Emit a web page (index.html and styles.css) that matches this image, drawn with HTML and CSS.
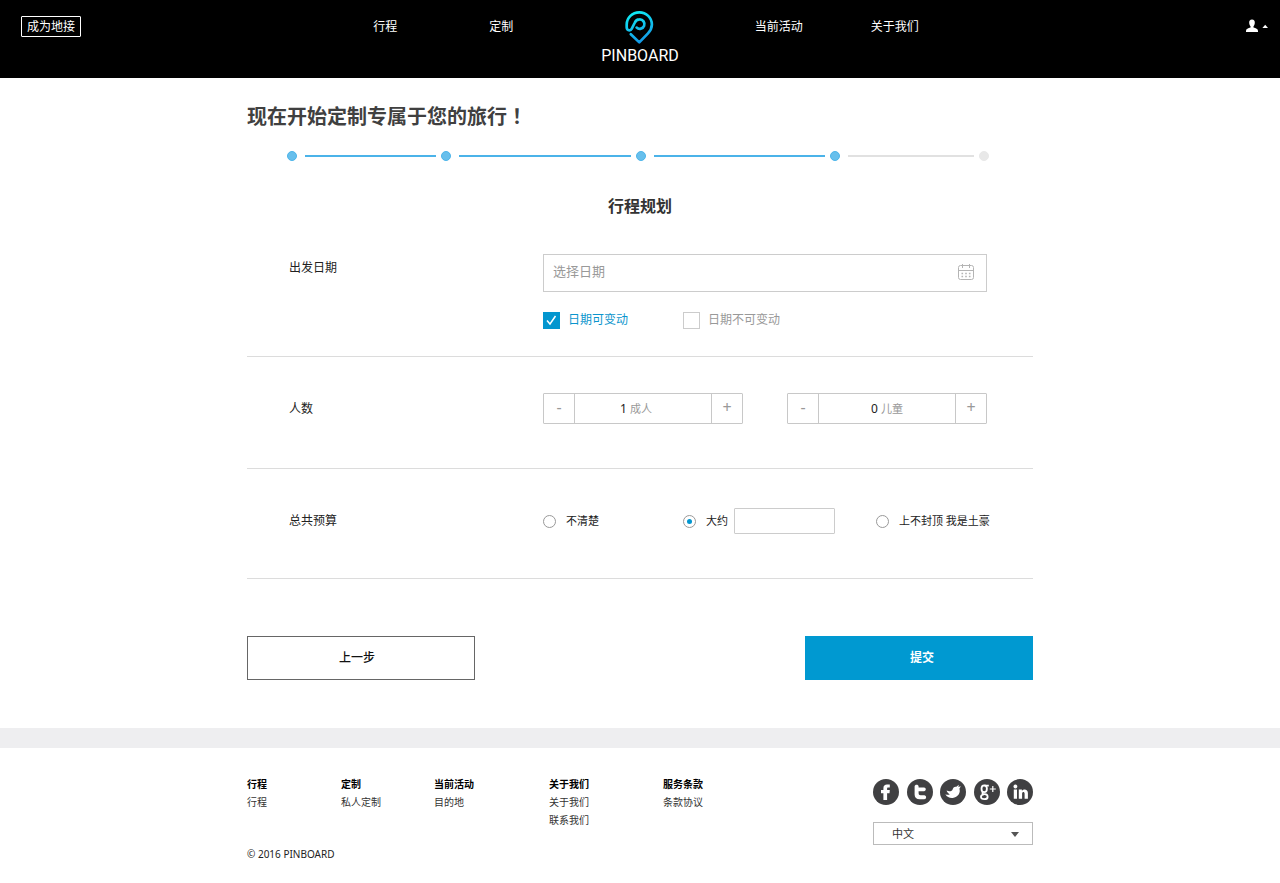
FILE: index.html
```html
<!DOCTYPE html>
<html lang="zh-CN">
<head>
<meta charset="utf-8">
<meta name="viewport" content="width=device-width, initial-scale=1">
<title>PINBOARD</title>
<link rel="stylesheet" href="styles.css">
</head>
<body>
<header class="header">
  <div class="header-side header-left">
    <button class="agent-button" type="button">成为地接</button>
    <nav class="nav nav-left">
      <a href="#trips">行程</a>
      <a href="#custom">定制</a>
    </nav>
  </div>
  <a class="logo" href="#home">
    <svg class="logo-pin" viewBox="1 0 32 36" aria-hidden="true">
      <defs>
        <linearGradient id="pin" gradientUnits="userSpaceOnUse" x1="8" y1="2" x2="20" y2="34">
          <stop offset="0" stop-color="#0ff0f4"/>
          <stop offset="1" stop-color="#1495e6"/>
        </linearGradient>
      </defs>
      <path d="M7.8 25.2 L16.3 33.4 L25 24.4 C28 21.2 28.9 18.6 28.9 15.6 A12.6 12.3 0 0 0 3.7 15.6 V18.2 C3.7 21.6 7.4 22.4 8.8 19.6 L11.6 14 C12.6 11.6 14.4 10.4 16.6 10.4 A4.7 4.7 0 1 1 13.6 18.6" fill="none" stroke="url(#pin)" stroke-width="2.7" stroke-linecap="round" stroke-linejoin="round"/>
    </svg>
    <span class="logo-text">PINBOARD</span>
  </a>
  <div class="header-side header-right">
    <nav class="nav nav-right">
      <a href="#activities">当前活动</a>
      <a href="#about">关于我们</a>
    </nav>
    <button class="user-button" type="button" aria-label="用户">
      <svg width="22" height="14" viewBox="0 0 22 14" aria-hidden="true">
        <path d="M6 0.5 C8 0.5 9 1.8 8.8 4 C8.7 5.6 8.1 6.5 7.5 7.2 V8.6 C9.8 9.4 12 9.8 12 12 V13 H0 V12 C0 9.8 2.2 9.4 4.5 8.6 V7.2 C3.9 6.5 3.3 5.6 3.2 4 C3 1.8 4 0.5 6 0.5 Z M16.4 9 L19.2 5.8 L22 9 Z" fill="#fff"/>
      </svg>
    </button>
  </div>
</header>

<main class="page">
  <h1 class="title">现在开始定制专属于您的旅行<span class="title-mark" lang="zh-TW">！</span></h1>
  <div class="steps" aria-hidden="true">
    <span class="dot"></span><span class="line"></span>
    <span class="dot"></span><span class="line line-long"></span>
    <span class="dot"></span><span class="line line-long"></span>
    <span class="dot"></span><span class="line line-off"></span>
    <span class="dot dot-off"></span>
  </div>
  <h2 class="subtitle">行程规划</h2>

  <form>
    <section class="row row-date">
      <label class="row-label" for="date">出发日期</label>
      <div>
        <div class="date-field">
          <input class="date-input" id="date" type="text" placeholder="选择日期">
          <svg class="calendar" viewBox="0 0 16 16" aria-hidden="true">
            <g fill="none" stroke="#b4b4b4">
              <rect x="0.5" y="1.5" width="15" height="14" rx="2"/>
              <path d="M1 6.5 H15 M4.5 0 V4 M11.5 0 V4"/>
              <path d="M3.5 9.5 H13 M3.5 12.5 H13" stroke-width="1.4" stroke-dasharray="1.6 2.1"/>
            </g>
          </svg>
        </div>
        <div class="options">
          <label class="check check-on"><input type="checkbox" checked>日期可变动</label>
          <label class="check"><input type="checkbox">日期不可变动</label>
        </div>
      </div>
    </section>

    <section class="row row-people">
      <span class="row-label">人数</span>
      <div class="counters">
        <div class="counter counter-adults">
          <button type="button" aria-label="减少成人">-</button>
          <label class="counter-value"><input type="text" value="1">成人</label>
          <button type="button" aria-label="增加成人">+</button>
        </div>
        <div class="counter">
          <button type="button" aria-label="减少儿童">-</button>
          <label class="counter-value"><input type="text" value="0">儿童</label>
          <button type="button" aria-label="增加儿童">+</button>
        </div>
      </div>
    </section>

    <section class="row row-budget">
      <span class="row-label">总共预算</span>
      <div class="options">
        <label class="radio"><input type="radio" name="budget">不清楚</label>
        <div class="amount">
          <label class="radio"><input type="radio" name="budget" checked>大约</label>
          <input class="amount-input" type="text" aria-label="预算金额">
        </div>
        <label class="radio"><input type="radio" name="budget">上不封顶 我是土豪</label>
      </div>
    </section>

    <div class="actions">
      <button class="action action-back" type="button">上一步</button>
      <button class="action action-primary" type="submit">提交</button>
    </div>
  </form>
</main>

<footer class="footer">
  <div class="footer-inner">
    <div>
      <div class="footer-columns">
        <div><h3>行程</h3><a href="#trips">行程</a></div>
        <div><h3>定制</h3><a href="#private">私人定制</a></div>
        <div><h3>当前活动</h3><a href="#places">目的地</a></div>
        <div><h3>关于我们</h3><a href="#about">关于我们</a><a href="#contact">联系我们</a></div>
        <div><h3>服务条款</h3><a href="#terms">条款协议</a></div>
      </div>
      <p class="copyright">© 2016 PINBOARD</p>
    </div>
    <div class="footer-side">
      <div class="social">
        <a href="#facebook" aria-label="Facebook"><svg viewBox="0 0 26 26"><circle cx="13" cy="13" r="13"/><path d="M16.8 5.4 V8.6 H15.2 C14.3 8.6 14.1 9 14.1 9.8 V11 H16.8 L16.5 14.2 H14.1 V21 H10.4 V14.2 H8 V11 H10.4 V9.2 C10.4 6.6 11.8 5.4 14 5.4 Z"/></svg></a>
        <a href="#tumblr" aria-label="Twitter"><svg viewBox="0 0 26 26"><circle cx="13" cy="13" r="13"/><path d="M7.6 7.6 C7.6 5 11.6 5 11.6 7.6 V8.6 H17 C19.4 8.6 19.4 12.2 17 12.2 H11.6 V14 C11.6 15.6 12.2 16.2 13.6 16.2 H17.2 C19.8 16.2 19.8 20.2 17.2 20.2 H12.8 C9.4 20.2 7.6 18.4 7.6 15.4 Z"/></svg></a>
        <a href="#twitter" aria-label="Twitter 动态"><svg viewBox="0 0 26 26"><circle cx="13" cy="13" r="13"/><path d="M5.4 15.2 C7 16 8.6 16 9.8 15.4 C8 14.4 6.8 13 6.6 11.6 C9 12.8 11.4 12.6 12.4 11 C13 8.6 14.4 7.4 16.4 7.8 L18.8 5.8 L18.4 8 L20.8 7.2 L19.4 9.8 C20.8 13.6 18 18 13.6 18.8 C10.4 19.4 7 18.4 5.4 15.2 Z"/></svg></a>
        <a href="#google" aria-label="Google+"><svg viewBox="0 0 26 26"><circle cx="13" cy="13" r="13"/><g fill="none" stroke="#fff" stroke-width="1.8"><ellipse cx="10.2" cy="9.8" rx="2.7" ry="3.4"/><path d="M10.4 6.6 H14.8 M9 13 C7.8 14.2 8.4 15 10.6 15.2 C14.8 15.6 14.6 20.2 10.4 20.2 C5.8 20.2 6 16 9.8 15.4"/><path d="M15.8 10 H21.8 M18.8 7 V13" stroke-width="1.2"/></g></svg></a>
        <a href="#linkedin" aria-label="LinkedIn"><svg viewBox="0 0 26 26"><circle cx="13" cy="13" r="13"/><path d="M6.8 10.6 H10 V19.8 H6.8 Z M8.4 5.6 A1.9 1.9 0 1 1 8.39 5.6 Z M11.8 10.6 H14.9 V11.8 C17 9.4 20.9 10.2 20.9 14 V19.8 H17.6 V14.8 C17.6 12.4 15.1 12.6 15.1 14.8 V19.8 H11.8 Z"/></svg></a>
      </div>
      <div class="language">
        <select aria-label="语言"><option>中文</option></select>
        <svg class="language-arrow" viewBox="0 0 8 5" aria-hidden="true"><path d="M0 0 H8 L4 5 Z"/></svg>
      </div>
    </div>
  </div>
</footer>
</body>
</html>
```
FILE: styles.css
```css
* { box-sizing: border-box; }

body {
  margin: 0;
  background: #fff;
  color: #333;
  font: 12px/20px "Noto Sans", "Noto Sans CJK SC", sans-serif;
}

button, input, select { font: inherit; color: inherit; }
button { padding: 0; cursor: pointer; }
input { min-width: 0; margin: 0; }
a { color: inherit; text-decoration: none; }
h1, h2, h3, p { margin: 0; }

/* Header */
.header {
  display: grid;
  grid-template-columns: 1fr auto 1fr;
  min-height: 78px;
  background: #000;
  color: #fff;
}
.header-side {
  display: flex;
  justify-content: space-between;
  align-items: flex-start;
  padding-top: 16px;
}
.header-left { padding-left: 21px; }
.header-right { padding-right: 12px; }
.agent-button {
  padding: 0 5px;
  border: 1px solid #fff;
  border-radius: 1px;
  background: none;
  line-height: 19px;
}
.nav { display: flex; }
.nav { line-height: 22px; }
.nav-left { gap: 92px; padding-right: 88px; }
.nav-right { gap: 68px; padding-left: 76px; }
.user-button { display: flex; padding: 3px 0; border: 0; background: none; }
.logo {
  display: flex;
  flex-direction: column;
  align-items: center;
  padding-top: 9px;
}
.logo-pin { width: 32px; height: 36px; }
.logo-text { font: 16px/22px Roboto, sans-serif; }

/* Page */
.page { max-width: 786px; margin: 0 auto; }
.title {
  padding-top: 25px;
  color: #404040;
  font-size: 20px;
  line-height: 28px;
}
.title-mark { font-family: "Noto Sans CJK TC", sans-serif; line-height: 1; }
.steps {
  display: flex;
  align-items: center;
  gap: 5px;
  margin: 20px 44px 0 40px;
}
.dot {
  width: 10px;
  height: 10px;
  border: 1px solid #4db5ea;
  border-radius: 50%;
  background: #67bfec;
}
.dot-off { border-color: #e8e8e8; background: #e8e8e8; }
.line { flex: 131; height: 2px; margin-left: 3px; background: #4bb3e9; }
.line-long { flex: 172; }
.line-off { flex: 126; background: #e1e1e1; }
.subtitle {
  padding-top: 33px;
  font-size: 16px;
  line-height: 24px;
  text-align: center;
}

/* Form rows */
.row {
  display: grid;
  grid-template-columns: 254px 1fr;
  padding: 36px 46px 44px 42px;
  border-bottom: 1px solid #dcdcdc;
}
.row-label { color: #222; }
.row-date { padding-bottom: 26px; }
.row-date .row-label { padding-top: 4px; }
.row-people { align-items: center; }
.row-budget { align-items: center; padding-top: 39px; }

.date-field { position: relative; }
.date-input {
  width: 100%;
  height: 38px;
  padding: 0 40px 4px 9px;
  border: 1px solid #ccc;
  background: #fff;
  font-size: 13px;
}
.date-input::placeholder { color: #999; opacity: 1; }
.calendar {
  position: absolute;
  top: 10px;
  right: 13px;
  width: 16px;
  height: 16px;
}
.options { display: grid; grid-template-columns: 140px 193px auto; align-items: center; }
.row-date .options { padding-top: 18px; }
.check, .radio { display: flex; align-items: center; white-space: nowrap; }
.check { gap: 8px; color: #999; }
.check-on { color: #0b95cd; }
.check input {
  width: 17px;
  height: 17px;
  border: 1px solid #ccc;
  background: #fff;
  appearance: none;
}
.check input:checked {
  border-color: #0396cf;
  background: #0396cf url("data:image/svg+xml,%3Csvg xmlns='http://www.w3.org/2000/svg' viewBox='0 0 15 15'%3E%3Cpath d='M3 7.5 L6 11 L11.5 3' fill='none' stroke='white' stroke-width='1.5'/%3E%3C/svg%3E") center / 15px no-repeat;
}

.counters { display: flex; justify-content: space-between; }
.counter { display: flex; width: 200px; height: 31px; border: 1px solid #c8c8c8; border-radius: 1px; }
.counter button {
  width: 30px;
  padding-bottom: 4px;
  border: 0;
  background: none;
  color: #999;
  font-size: 16px;
}
.counter-value {
  display: flex;
  flex: 1;
  align-items: center;
  justify-content: center;
  gap: 2px;
  border: solid #c8c8c8;
  border-width: 0 1px;
  color: #999;
  font-size: 11px;
}
.counter-adults .counter-value { padding-right: 14px; }
.counter-value input {
  width: 8px;
  padding: 0;
  border: 0;
  background: none;
  color: #222;
  font-size: 12px;
}

.radio { gap: 10px; font-size: 11px; color: #222; }
.radio input {
  display: grid;
  place-items: center;
  width: 13px;
  height: 13px;
  border: 1px solid #999;
  border-radius: 50%;
  background: #fff;
  appearance: none;
}
.radio input:checked::before {
  content: "";
  width: 5px;
  height: 5px;
  border-radius: 50%;
  background: #0396cf;
}
.amount { display: flex; align-items: center; gap: 6px; }
.amount-input { width: 101px; height: 26px; border: 1px solid #ccc; border-radius: 1px; }

.actions { display: flex; justify-content: space-between; padding: 57px 0 48px; }
.action {
  width: 228px;
  height: 44px;
  border: 1px solid #666;
  background: #fff;
  color: #111;
  font-weight: 500;
}
.action-back { padding-right: 8px; }
.action-primary {
  padding-left: 6px;
  border-color: #0099d1;
  background: #0099d1;
  color: #fff;
  font-weight: 700;
}

/* Footer */
.footer { border-top: 20px solid #eeeef0; }
.footer-inner {
  display: flex;
  justify-content: space-between;
  max-width: 786px;
  margin: 0 auto;
  padding: 27px 0 20px;
  font-size: 10px;
  line-height: 18px;
}
.footer-columns {
  display: grid;
  grid-template-columns: 94px 93px 115px 114px auto;
  min-height: 70px;
}
.footer-columns h3 { color: #000; font-size: 10px; }
.footer-columns a { display: block; }
.copyright { color: #222; }
.footer-side { width: 160px; padding-top: 4px; }
.social { display: flex; justify-content: space-between; }
.social svg { display: block; width: 26px; height: 26px; fill: #fff; }
.social circle { fill: #404042; }
.language { position: relative; margin-top: 17px; }
.language select {
  display: block;
  width: 100%;
  height: 23px;
  padding: 0 18px;
  border: 1px solid #bbb;
  border-radius: 0;
  background: #fff;
  color: #333;
  font-size: 11px;
  appearance: none;
}
.language-arrow {
  position: absolute;
  top: 10px;
  right: 14px;
  width: 8px;
  height: 5px;
  fill: #555;
  pointer-events: none;
}
```
